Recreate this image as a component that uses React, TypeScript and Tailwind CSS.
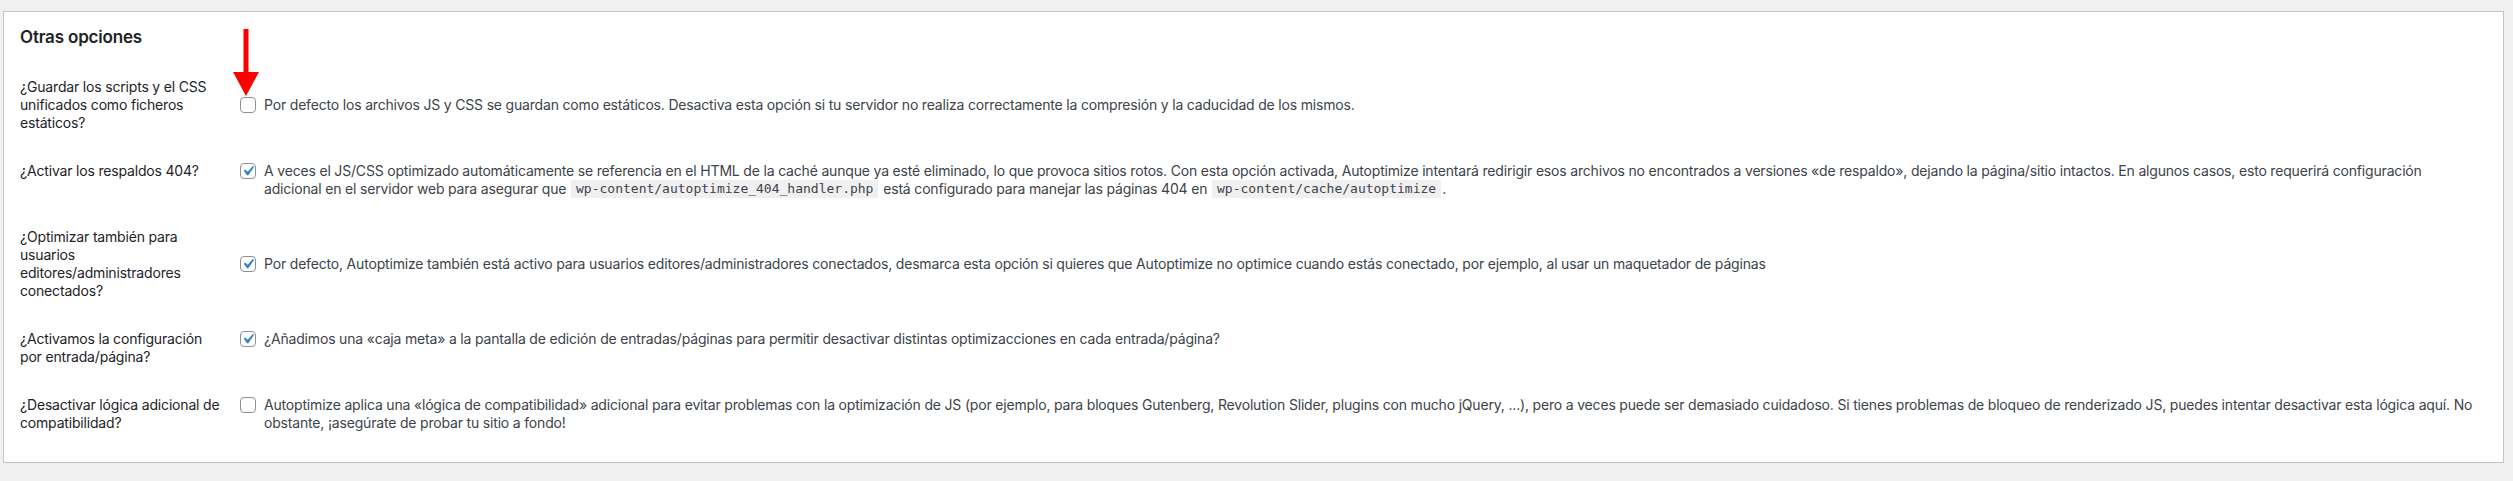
import React from "react";

const Check = ({ checked }: { checked: boolean }) => (
  <span className="relative block w-4 h-4 shrink-0 rounded-[4px] border border-[#8c8f94] bg-white">
    {checked && (
      <svg viewBox="0 0 20 20" className="absolute left-[-3px] top-[-3px] w-5 h-5">
        <path d="M14.83 4.89l1.34.94-5.81 8.38H9.02L5.78 9.67l1.34-1.25 2.57 2.4z" fill="#3582c4" />
      </svg>
    )}
  </span>
);

const Code = ({ children }: { children: React.ReactNode }) => (
  <code className="inline-block align-top bg-[#f0f0f1] px-[5px] py-[1px] mx-[1px] text-[13px] leading-[16px] tracking-normal text-[#3c434a] [font-family:'DejaVu_Sans_Mono',monospace]">
    {children}
  </code>
);

type RowProps = {
  label: string;
  checked: boolean;
  center?: boolean;
  children: React.ReactNode;
};

const Row = ({ label, checked, center, children }: RowProps) => (
  <div className={`flex py-[15px] ${center ? "items-center" : "items-start"}`}>
    <div className="w-[220px] pr-[16px] shrink-0 text-[#1d2327]">{label}</div>
    <div className="flex items-start gap-2 flex-1 min-w-0">
      <div className="pt-[1px]">
        <Check checked={checked} />
      </div>
      <div className="text-[#3c434a]">{children}</div>
    </div>
  </div>
);

export default function App() {
  return (
    <div className="min-h-[481px] bg-[#f0f0f1] pt-[11px] pl-[3px] pr-[9px] [font-family:Inter,'Noto_Sans',sans-serif] text-[14px] leading-[18px] tracking-[-0.18px]">
      <div className="relative border border-[#c3c4c7] bg-white pl-[16px] pr-[20px] pt-[15px] pb-[15px]">
        <h2 className="text-[17px] leading-[20px] font-semibold text-[#1d2327] mb-[16px]">Otras opciones</h2>
        <Row label="¿Guardar los scripts y el CSS unificados como ficheros estáticos?" checked={false} center>
          Por defecto los archivos JS y CSS se guardan como estáticos. Desactiva esta opción si tu servidor no realiza correctamente la compresión y la caducidad de los mismos.
        </Row>
        <Row label="¿Activar los respaldos 404?" checked>
          A veces el JS/CSS optimizado automáticamente se referencia en el HTML de la caché aunque ya esté eliminado, lo que provoca sitios rotos. Con esta opción activada, Autoptimize intentará redirigir esos archivos no encontrados a versiones «de respaldo», dejando la página/sitio intactos. En algunos casos, esto requerirá configuración
          <br />
          adicional en el servidor web para asegurar que <Code>wp-content/autoptimize_404_handler.php</Code> está configurado para manejar las páginas 404 en <Code>wp-content/cache/autoptimize</Code>.
        </Row>
        <Row label="¿Optimizar también para usuarios editores/administradores conectados?" checked center>
          Por defecto, Autoptimize también está activo para usuarios editores/administradores conectados, desmarca esta opción si quieres que Autoptimize no optimice cuando estás conectado, por ejemplo, al usar un maquetador de páginas
        </Row>
        <Row label="¿Activamos la configuración por entrada/página?" checked>
          ¿Añadimos una «caja meta» a la pantalla de edición de entradas/páginas para permitir desactivar distintas optimizacciones en cada entrada/página?
        </Row>
        <Row label="¿Desactivar lógica adicional de compatibilidad?" checked={false}>
          Autoptimize aplica una «lógica de compatibilidad» adicional para evitar problemas con la optimización de JS (por ejemplo, para bloques Gutenberg, Revolution Slider, plugins con mucho jQuery, ...), pero a veces puede ser demasiado cuidadoso. Si tienes problemas de bloqueo de renderizado JS, puedes intentar desactivar esta lógica aquí. No obstante, ¡asegúrate de probar tu sitio a fondo!
        </Row>
        <svg className="absolute left-[228px] top-[17px] w-[28px] h-[68px]" viewBox="0 0 28 68">
          <rect x="11.5" y="0" width="5" height="45" fill="#ff0000" />
          <polygon points="1,43 27,43 14,67" fill="#ff0000" />
        </svg>
      </div>
    </div>
  );
}
